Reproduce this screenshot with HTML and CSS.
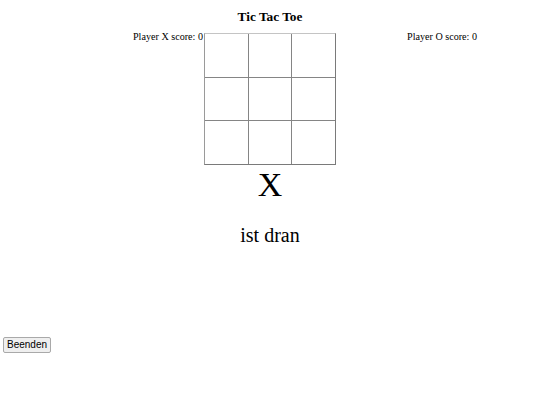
FILE: index.html
```html
<!DOCTYPE html>
<html>
<head>
<meta charset="utf-8">
<title>Tic Tac Toe</title>
<link rel="stylesheet" href="styles.css">
</head>
<body>
<h1 class="title">Tic Tac Toe</h1>
<div class="game">
  <div class="score score-x">Player X score: 0</div>
  <div class="board">
    <div class="cell"></div><div class="cell"></div><div class="cell"></div>
    <div class="cell"></div><div class="cell"></div><div class="cell"></div>
    <div class="cell"></div><div class="cell"></div><div class="cell"></div>
  </div>
  <div class="score score-o">Player O score: 0</div>
</div>
<div class="turn">
  <div class="turn-symbol">X</div>
  <p class="turn-text">ist dran</p>
</div>
<button class="quit">Beenden</button>
</body>
</html>
```

FILE: styles.css
```css
html, body {
  margin: 0;
  padding: 0;
  background: #ffffff;
}
body {
  font-family: "Liberation Serif", "Times New Roman", serif;
  color: #000000;
}
.title {
  margin: 9px 0 0 0;
  font-size: 13.3px;
  line-height: 15px;
  font-weight: bold;
  text-align: center;
}
.game {
  margin-top: 7px;
  display: grid;
  grid-template-columns: 1fr 132px 1fr;
  align-items: start;
}
.score {
  font-size: 10.15px;
  line-height: 12px;
}
.score-x {
  text-align: right;
  padding-right: 1px;
}
.score-o {
  padding-left: 71px;
}
.board {
  margin-top: 2px;
  display: grid;
  grid-template-columns: 43px 42px 43px;
  grid-template-rows: 43px 42px 43px;
  gap: 1px;
  background: #858585;
  border-style: solid;
  border-width: 1px;
  border-color: #c4c4c4 #7a7a7a #7a7a7a #9a9a9a;
}
.cell {
  background: #ffffff;
}
.turn {
  text-align: center;
}
.turn-symbol {
  font-size: 34px;
  line-height: 39px;
}
.turn-text {
  margin: 20px 0 0 0;
  font-size: 20px;
  line-height: 23px;
}
.quit {
  display: block;
  margin: 90px 0 0 3px;
  padding: 1px 3px;
  font-family: "Liberation Sans", Arial, sans-serif;
  font-size: 10px;
  line-height: 12px;
  color: #000000;
  background: #efefef;
  border: 1px solid #a9a9a9;
  border-radius: 2px;
}
```
